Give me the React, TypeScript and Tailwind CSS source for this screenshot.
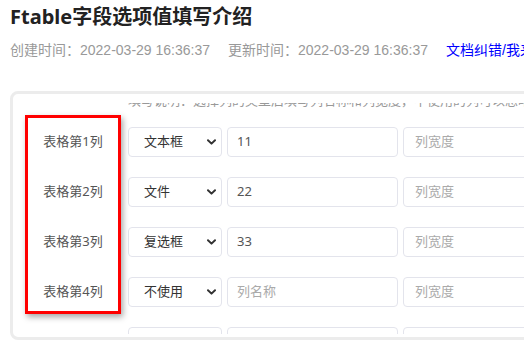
import { ReactNode } from "react";

type Row = { label: string; type: string; name: string };

const rows: Row[] = [
  { label: "表格第1列", type: "文本框", name: "11" },
  { label: "表格第2列", type: "文件", name: "22" },
  { label: "表格第3列", type: "复选框", name: "33" },
  { label: "表格第4列", type: "不使用", name: "" },
];

const font = { fontFamily: '"Noto Sans", "Noto Sans CJK SC", sans-serif' };

function Chevron() {
  return (
    <svg width="9" height="6" viewBox="0 0 9 6" className="shrink-0">
      <path d="M1 1.2 L4.5 4.6 L8 1.2" fill="none" stroke="#333" strokeWidth="2" strokeLinecap="round" strokeLinejoin="round" />
    </svg>
  );
}

function Box({ children, className }: { children?: ReactNode; className: string }) {
  return (
    <div className={`h-[30px] shrink-0 flex items-center rounded-[4px] border border-[#e3e4ec] bg-white text-[13px] ${className}`}>
      {children}
    </div>
  );
}

export default function App() {
  return (
    <div className="w-[524px] h-[347px] overflow-hidden bg-white" style={font}>
      {/* Header */}
      <div className="px-[10px] pt-[3px]">
        <h1 className="text-[20px] leading-[28px] font-bold text-[#222] whitespace-nowrap">Ftable字段选项值填写介绍</h1>
        <div
          className="mt-[9px] flex gap-[18px] text-[14px] leading-[20px] text-[#999] whitespace-nowrap"
          style={{ fontFamily: '"Liberation Sans", "Noto Sans CJK SC", sans-serif' }}
        >
          <span>创建时间：2022-03-29 16:36:37</span>
          <span>更新时间：2022-03-29 16:36:37</span>
          <span className="text-[#0000ff]">文档纠错/我来补充</span>
        </div>
      </div>

      {/* Panel */}
      <div className="relative ml-[10px] mt-[31px] w-[560px] h-[249px] rounded-[8px] border-[3px] border-[#ececec] pt-[9px] pb-[3px] overflow-hidden">
        <div className="h-full overflow-hidden pl-[12px]">
          <div className="-mt-[13px]">
            <div className="flex gap-[7px]">
              <div className="w-[96px] shrink-0" />
              <p className="text-[13px] leading-[20px] text-[#999] whitespace-nowrap">
                填写说明：选择列的类型后填写列名称和列宽度，不使用的列可以忽略不填写
              </p>
            </div>
            <div className="mt-[17px] flex flex-col gap-[20px]">
              {rows.map((r, i) => (
                <div key={i} className="flex items-center">
                  <div className="w-[96px] shrink-0 text-center text-[13px] text-[#555]">{r.label}</div>
                  <div className="ml-[7px] flex gap-[5px]">
                    <Box className="w-[94px] justify-between pl-[15px] pr-[5px] text-[#333]">
                      <span>{r.type}</span>
                      <Chevron />
                    </Box>
                    <Box className="w-[171px] px-[9px]">
                      {r.name ? <span className="text-[#555]">{r.name}</span> : <span className="text-[#aaa]">列名称</span>}
                    </Box>
                    <Box className="w-[171px] px-[11px]">
                      <span className="text-[#aaa]">列宽度</span>
                    </Box>
                  </div>
                </div>
              ))}
              {/* next row, scrolled out of view */}
              <div className="flex items-center">
                <div className="w-[96px] shrink-0" />
                <div className="ml-[7px] flex gap-[5px]">
                  <Box className="w-[94px]" />
                  <Box className="w-[171px]" />
                  <Box className="w-[171px]" />
                </div>
              </div>
            </div>
          </div>
        </div>

        {/* Annotation */}
        <div className="absolute left-[12px] top-[21px] w-[96px] h-[199px] border-[3px] border-[#ff0000] shadow-[2px_3px_6px_rgba(0,0,0,0.35)]" />
      </div>
    </div>
  );
}
